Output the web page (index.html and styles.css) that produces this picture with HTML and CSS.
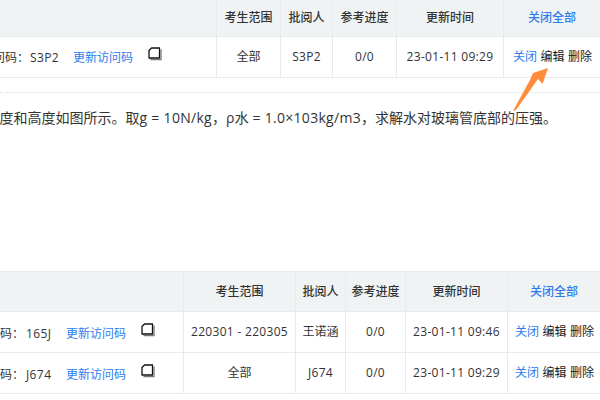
FILE: index.html
```html
<!DOCTYPE html>
<html lang="zh">
<head>
<meta charset="utf-8">
<title>考试列表</title>
<link rel="stylesheet" href="styles.css">
</head>
<body>
<div class="page">
  <section class="table table-top">
    <div class="row head">
      <div class="cell first"></div>
      <div class="cell">考生范围</div>
      <div class="cell">批阅人</div>
      <div class="cell">参考进度</div>
      <div class="cell">更新时间</div>
      <div class="cell link">关闭全部</div>
    </div>
    <div class="row">
      <div class="cell first"><div class="code"><span>访问码：</span><span class="val">S3P2</span><span class="link">更新访问码</span><svg class="copy" viewBox="0 0 14 14"><path d="M3.5 1H11.5V11H1V3.5Z" fill="#fff" stroke="#111" stroke-width="1.3" stroke-linejoin="round"/><path d="M2.5 12.6H13V2.5" fill="none" stroke="#777" stroke-width="1.3"/></svg></div></div>
      <div class="cell">全部</div>
      <div class="cell latin">S3P2</div>
      <div class="cell latin">0/0</div>
      <div class="cell latin">23-01-11 09:29</div>
      <div class="cell ops"><span class="link">关闭</span><span class="dark">编辑</span><span class="dark">删除</span></div>
    </div>
  </section>
  <div class="dots"></div>
  <p class="question"><span>如图所示，玻璃管的底面积、水的深度和高度如图所示。取<span class="latin">g = 10N/kg</span>，<span class="latin">ρ</span>水 <span class="latin">= 1.0×103kg/m3</span>，求解水对玻璃管底部的压强。</span></p>
  <section class="table table-bottom">
    <div class="row head">
      <div class="cell first"></div>
      <div class="cell">考生范围</div>
      <div class="cell">批阅人</div>
      <div class="cell">参考进度</div>
      <div class="cell">更新时间</div>
      <div class="cell link">关闭全部</div>
    </div>
    <div class="row">
      <div class="cell first"><div class="code"><span>访问码：</span><span class="val">165J</span><span class="link">更新访问码</span><svg class="copy" viewBox="0 0 14 14"><path d="M3.5 1H11.5V11H1V3.5Z" fill="#fff" stroke="#111" stroke-width="1.3" stroke-linejoin="round"/><path d="M2.5 12.6H13V2.5" fill="none" stroke="#777" stroke-width="1.3"/></svg></div></div>
      <div class="cell latin">220301 - 220305</div>
      <div class="cell">王诺涵</div>
      <div class="cell latin">0/0</div>
      <div class="cell latin">23-01-11 09:46</div>
      <div class="cell ops"><span class="link">关闭</span><span class="dark">编辑</span><span class="dark">删除</span></div>
    </div>
    <div class="row">
      <div class="cell first"><div class="code"><span>访问码：</span><span class="val">J674</span><span class="link">更新访问码</span><svg class="copy" viewBox="0 0 14 14"><path d="M3.5 1H11.5V11H1V3.5Z" fill="#fff" stroke="#111" stroke-width="1.3" stroke-linejoin="round"/><path d="M2.5 12.6H13V2.5" fill="none" stroke="#777" stroke-width="1.3"/></svg></div></div>
      <div class="cell">全部</div>
      <div class="cell latin">J674</div>
      <div class="cell latin">0/0</div>
      <div class="cell latin">23-01-11 09:29</div>
      <div class="cell ops"><span class="link">关闭</span><span class="dark">编辑</span><span class="dark">删除</span></div>
    </div>
  </section>
  <svg class="arrow" viewBox="0 0 600 400"><polygon points="513,111 530,80 533,73 548,68 542.5,84 538,79 516,110" fill="#ff8c3a"/></svg>
</div>
</body>
</html>
```
FILE: styles.css
```css
* { box-sizing: border-box; }
html, body { margin: 0; padding: 0; }
body {
  width: 600px;
  height: 400px;
  overflow: hidden;
  background: #fff;
  color: #333;
  font: 12px/18px "Open Sans", "Noto Sans CJK SC", sans-serif;
}
.page { position: relative; width: 600px; height: 400px; overflow: hidden; }
.table { display: flex; flex-direction: column; }
.table-top { --cols: 216px 64px 52px 64px 107px 97px; --code-pad: 54px; --val-gap: 1px; --val-width: 43px; }
.table-bottom { --cols: 183px 112px 50px 60px 102px 93px; --code-pad: 28px; --val-gap: 2px; --val-width: 40px; border-top: 1px solid #e8eaec; }
.row {
  display: grid;
  grid-template-columns: var(--cols);
  height: 41px;
  border-bottom: 1px solid #e8eaec;
}
.head { background: #f0f3f4; font-weight: 500; }
.table-top .head { height: 37px; }
.table-bottom .head { height: 40px; }
.cell {
  display: flex;
  align-items: center;
  justify-content: center;
  border-left: 1px solid #e8eaec;
  white-space: nowrap;
}
.table-bottom .row:not(.head) .cell { padding-bottom: 1px; }
.latin { letter-spacing: .3px; }
.first { border-left: 0; justify-content: flex-end; overflow: hidden; }
.code { display: flex; align-items: center; padding-right: var(--code-pad); }
.table-top .first { padding-top: 1px; }
.table-bottom .row:not(.head) .first { padding: 3px 0 0; }
.val { margin-left: var(--val-gap); width: var(--val-width); letter-spacing: .4px; }
.copy { width: 14px; height: 14px; margin: -8px 0 0 15px; flex: none; }
.link { color: #2d7cf0; }
.dark { color: #1a1a1a; margin-left: 3.5px; }
.ops { justify-content: flex-start; padding-left: 9px; }
.table-bottom .ops { padding-left: 7px; }
.dots { margin-top: 14px; border-top: 1px dotted #ddd; height: 1px; }
.question {
  display: flex;
  justify-content: flex-end;
  height: 178px;
  margin: 0;
  padding: 15px 43px 0 0;
  overflow: hidden;
  white-space: nowrap;
  font-size: 14px;
  line-height: 20px;
}
.arrow { position: absolute; left: 0; top: 0; width: 600px; height: 400px; pointer-events: none; }
```
